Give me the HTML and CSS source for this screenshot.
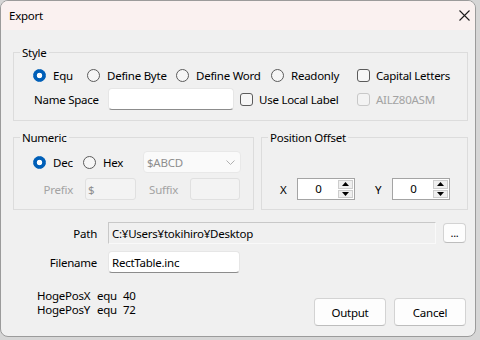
FILE: index.html
```html
<!DOCTYPE html>
<html>
<head>
<meta charset="utf-8">
<title>Export</title>
<link rel="stylesheet" href="styles.css">
</head>
<body>
<div class="window">
  <div class="titlebar">
    <span class="title">Export</span>
    <span class="close"><svg width="11" height="11" viewBox="0 0 11 11"><path d="M0.5 0.5 L10.5 10.5 M10.5 0.5 L0.5 10.5" stroke="#1b1b1b" stroke-width="1.1" fill="none"/></svg></span>
  </div>
  <div class="content">
    <fieldset class="group">
      <legend>Style</legend>
      <div class="style-row1">
        <label class="opt"><span class="radio checked"></span>Equ</label>
        <label class="opt"><span class="radio"></span>Define Byte</label>
        <label class="opt"><span class="radio"></span>Define Word</label>
        <label class="opt"><span class="radio"></span>Readonly</label>
        <label class="opt"><span class="check"></span>Capital Letters</label>
      </div>
      <div class="style-row2">
        <span class="lbl ns">Name Space</span>
        <span class="tb"></span>
        <span></span>
        <label class="opt"><span class="check"></span>Use Local Label</label>
        <label class="opt disabled"><span class="check"></span>AILZ80ASM</label>
      </div>
    </fieldset>
    <div class="groups2">
      <fieldset class="group numeric">
        <legend>Numeric</legend>
        <div class="num-row1">
          <label class="opt"><span class="radio checked"></span>Dec</label>
          <label class="opt"><span class="radio"></span>Hex</label>
          <span class="combo"><span>$ABCD</span><svg width="9" height="5" viewBox="0 0 9 5"><path d="M0.5 0.5 L4.5 4.5 L8.5 0.5" stroke="#b0b0b0" fill="none"/></svg></span>
        </div>
        <div class="num-row2">
          <span class="lbl-r disabled-text">Prefix</span>
          <span class="tb-dis">$</span>
          <span class="lbl-r disabled-text">Suffix</span>
          <span class="tb-dis"></span>
        </div>
      </fieldset>
      <fieldset class="group pos">
        <legend>Position Offset</legend>
        <div class="pos-row">
          <span class="lbl">X</span>
          <span class="spin"><span class="spin-val">0</span><span class="spin-btns"><span class="sb"><svg width="7" height="4" viewBox="0 0 7 4"><path d="M0 4 L3.5 0 L7 4Z" fill="#000"/></svg></span><span class="sb"><svg width="7" height="4" viewBox="0 0 7 4"><path d="M0 0 L3.5 4 L7 0Z" fill="#000"/></svg></span></span></span>
          <span></span>
          <span class="lbl">Y</span>
          <span class="spin"><span class="spin-val">0</span><span class="spin-btns"><span class="sb"><svg width="7" height="4" viewBox="0 0 7 4"><path d="M0 4 L3.5 0 L7 4Z" fill="#000"/></svg></span><span class="sb"><svg width="7" height="4" viewBox="0 0 7 4"><path d="M0 0 L3.5 4 L7 0Z" fill="#000"/></svg></span></span></span>
        </div>
      </fieldset>
    </div>
    <div class="path-row">
      <span class="flabel">Path</span>
      <span class="tb-ro">C:¥Users¥tokihiro¥Desktop</span>
      <button class="btn small">...</button>
    </div>
    <div class="file-row">
      <span class="flabel">Filename</span>
      <span class="tb file">RectTable.inc</span>
    </div>
    <div class="bottom">
      <div class="code">
        <span>HogePosX</span><span>equ</span><span>40</span>
        <span>HogePosY</span><span>equ</span><span>72</span>
      </div>
      <div class="buttons">
        <button class="btn">Output</button>
        <button class="btn">Cancel</button>
      </div>
    </div>
  </div>
</div>
</body>
</html>
```
FILE: styles.css
```css
* { box-sizing: border-box; }
html, body { margin: 0; padding: 0; }
body {
  width: 480px;
  height: 340px;
  overflow: hidden;
  background: #d6d6d6;
  font-family: "Noto Sans", "Open Sans", sans-serif;
  font-size: 11.5px;
  letter-spacing: -0.25px;
  color: #000;
}
.window {
  width: 476px;
  height: 337px;
  border: 1px solid #9b9b9b;
  border-radius: 8px;
  background: #f0f0f0;
  overflow: hidden;
  display: flex;
  flex-direction: column;
}
.titlebar {
  height: 29px;
  flex: none;
  background: #faf1f0;
  display: flex;
  align-items: center;
  justify-content: space-between;
  padding-left: 8px;
}
.title { line-height: 16px; }
.close { display: flex; margin-right: 5px; }
.content {
  padding: 15px 7px 0 12px;
  display: flex;
  flex-direction: column;
}
.group {
  margin: 0;
  padding: 0;
  border: 1px solid #dcdcdc;
  min-width: 0;
}
.group legend {
  padding: 0 2px;
  margin-left: 6px;
  line-height: 15px;
  height: 15px;
}
.opt {
  display: flex;
  align-items: center;
  white-space: nowrap;
}
.radio {
  width: 13px;
  height: 13px;
  flex: none;
  border-radius: 50%;
  border: 1px solid #5b5b5b;
  background: #f6f6f6;
  margin-right: 7px;
}
.radio.checked {
  border-color: #005fb8;
  background: radial-gradient(circle at center, #fff 0 2.4px, #005fb8 3.1px);
}
.check {
  width: 13px;
  height: 13px;
  flex: none;
  border-radius: 3px;
  border: 1px solid #5b5b5b;
  background: #f6f6f6;
  margin-right: 6px;
}
.opt.disabled { color: #a3a3a3; }
.opt.disabled .check { border-color: #c8c8c8; background: #f3f3f3; }
.disabled-text { color: #a3a3a3; }

.style-row1 {
  display: grid;
  grid-template-columns: 54px 89px 95px 86px auto;
  align-items: center;
  height: 18px;
  margin: 6px 0 0 19px;
}
.style-row2 {
  display: grid;
  grid-template-columns: 75px 126px 6px 117px auto;
  align-items: center;
  height: 22px;
  margin: 4px 0 10px 19px;
}
.lbl.ns { padding-left: 1px; }
.tb {
  height: 22px;
  background: #fff;
  border: 1px solid #e6e6e6;
  border-bottom-color: #8c8c8c;
  border-radius: 4px;
  padding: 0 3px;
  display: flex;
  align-items: center;
  white-space: nowrap;
}
.groups2 {
  display: flex;
  gap: 7px;
  margin-top: 9px;
}
.numeric { width: 241px; flex: none; }
.pos { flex: 1; }
.num-row1 {
  display: grid;
  grid-template-columns: 50px 60px 98px;
  align-items: center;
  height: 22px;
  margin: 6px 0 0 19px;
}
.combo {
  height: 22px;
  background: #fafafa;
  border: 1px solid #e8e8e8;
  border-radius: 4px;
  padding: 0 5px 0 3px;
  display: flex;
  align-items: center;
  justify-content: space-between;
  color: #8e8e8e;
}
.num-row2 {
  display: grid;
  grid-template-columns: 52px 51px 54px 50px;
  align-items: center;
  height: 22px;
  margin: 5px 0 9px 19px;
}
.lbl-r { text-align: right; padding-right: 12px; }
.tb-dis {
  height: 22px;
  background: #f3f3f3;
  border: 1px solid #e0e0e0;
  border-radius: 3px;
  padding: 0 2px;
  display: flex;
  align-items: center;
  color: #8e8e8e;
}
.pos-row {
  display: grid;
  grid-template-columns: 17px 58px 20px 17px 58px;
  align-items: center;
  height: 22px;
  margin: 33px 0 0 18px;
}
.spin {
  width: 58px;
  height: 22px;
  background: #fff;
  border: 1px solid #a4a4a4;
  padding: 1px;
  display: flex;
}
.spin-val {
  flex: 1;
  text-align: center;
  line-height: 18px;
}
.spin-btns {
  width: 15px;
  display: flex;
  flex-direction: column;
  gap: 1px;
}
.sb {
  flex: 1;
  background: #efefef;
  border: 1px solid #cdcdcd;
  display: flex;
  align-items: center;
  justify-content: center;
}
.path-row {
  display: grid;
  grid-template-columns: 95px 328px 30px;
  align-items: center;
  height: 22px;
  margin-top: 12px;
}
.file-row {
  display: grid;
  grid-template-columns: 95px 132px;
  align-items: center;
  height: 22px;
  margin-top: 7px;
}
.flabel { text-align: right; padding-right: 11px; }
.tb-ro {
  height: 22px;
  background: #f0f0f0;
  border: 1px solid;
  border-color: #c8c8c8 #f9f9f9 #f9f9f9 #c8c8c8;
  padding: 0 3px;
  display: flex;
  align-items: center;
  white-space: nowrap;
}
.tb.file { padding: 0 3px; }
.btn {
  font: inherit;
  letter-spacing: inherit;
  color: #000;
  width: 72px;
  height: 28px;
  background: #fdfdfd;
  border: 1px solid #d3d3d3;
  border-bottom-color: #bdbdbd;
  border-radius: 4px;
  padding: 0;
}
.btn.small {
  width: 23px;
  height: 20px;
  justify-self: end;
  line-height: 14px;
  font-size: 11px;
}
.bottom {
  display: flex;
  justify-content: space-between;
  align-items: flex-start;
  margin-top: 16px;
  padding: 0 2px 0 24px;
}
.code {
  display: grid;
  grid-template-columns: 60px 26px auto;
  line-height: 14px;
}
.buttons {
  display: flex;
  gap: 8px;
  margin-top: 9px;
}
```
